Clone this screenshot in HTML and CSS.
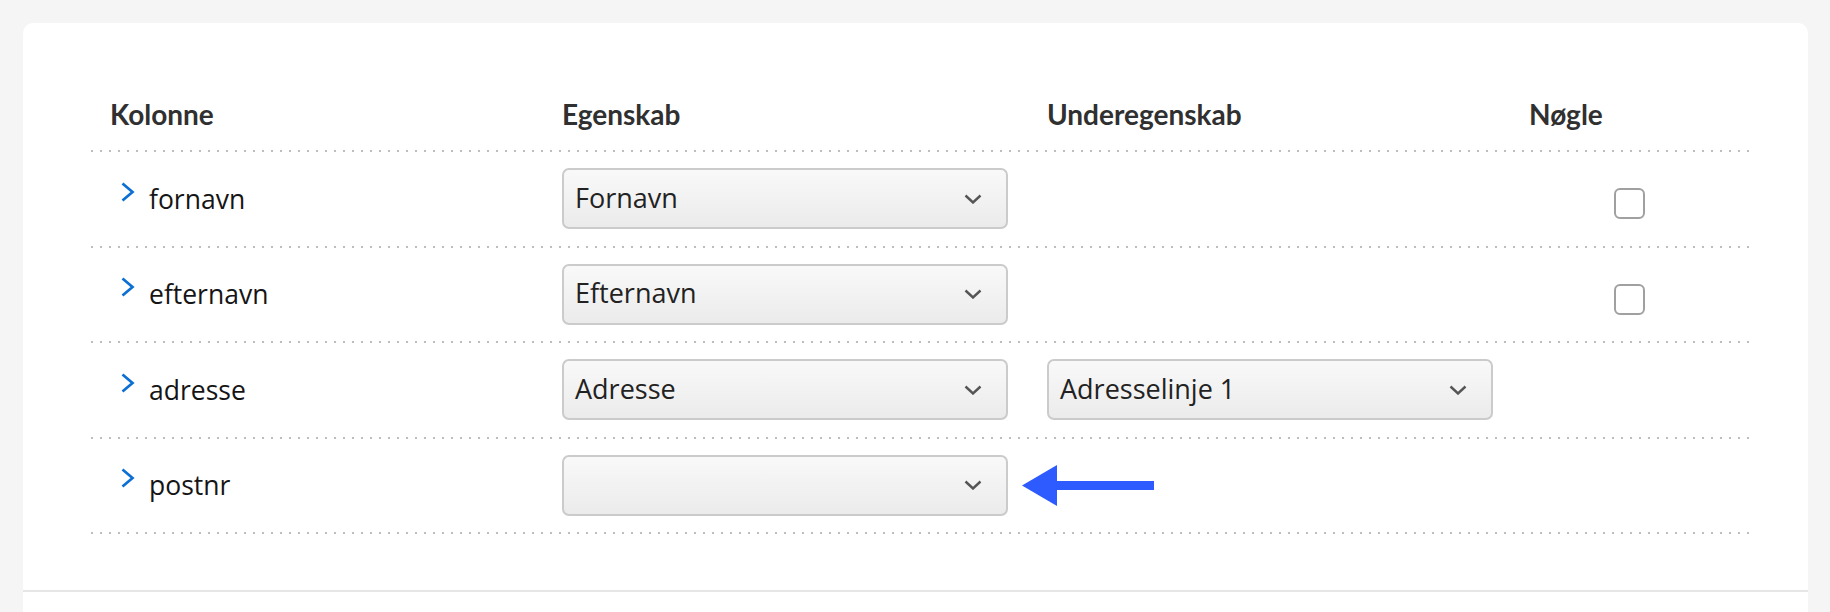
FILE: index.html
```html
<!DOCTYPE html>
<html lang="da">
<head>
<meta charset="utf-8">
<title>Kolonner</title>
<link rel="stylesheet" href="styles.css">
</head>
<body>
<div class="card">
  <div class="table">
    <div class="row head">
      <div class="cell c1">Kolonne</div>
      <div class="cell">Egenskab</div>
      <div class="cell">Underegenskab</div>
      <div class="cell">Nøgle</div>
    </div>

    <div class="row">
      <div class="cell c1"><svg class="exp" viewBox="0 0 15 20" width="15" height="20"><path d="M2.5 1.5 L12.5 10 L2.5 18.5" fill="none" stroke="#0b6fd3" stroke-width="2.7"/></svg><span class="name">fornavn</span></div>
      <div class="cell"><div class="select"><span>Fornavn</span><svg class="dd" viewBox="0 0 18 10" width="18" height="10"><path d="M1.5 1.5 L9 8.5 L16.5 1.5" fill="none" stroke="#555" stroke-width="2.4"/></svg></div></div>
      <div class="cell"></div>
      <div class="cell ck"><span class="checkbox"></span></div>
    </div>

    <div class="row">
      <div class="cell c1"><svg class="exp" viewBox="0 0 15 20" width="15" height="20"><path d="M2.5 1.5 L12.5 10 L2.5 18.5" fill="none" stroke="#0b6fd3" stroke-width="2.7"/></svg><span class="name">efternavn</span></div>
      <div class="cell"><div class="select"><span>Efternavn</span><svg class="dd" viewBox="0 0 18 10" width="18" height="10"><path d="M1.5 1.5 L9 8.5 L16.5 1.5" fill="none" stroke="#555" stroke-width="2.4"/></svg></div></div>
      <div class="cell"></div>
      <div class="cell ck"><span class="checkbox"></span></div>
    </div>

    <div class="row">
      <div class="cell c1"><svg class="exp" viewBox="0 0 15 20" width="15" height="20"><path d="M2.5 1.5 L12.5 10 L2.5 18.5" fill="none" stroke="#0b6fd3" stroke-width="2.7"/></svg><span class="name">adresse</span></div>
      <div class="cell"><div class="select"><span>Adresse</span><svg class="dd" viewBox="0 0 18 10" width="18" height="10"><path d="M1.5 1.5 L9 8.5 L16.5 1.5" fill="none" stroke="#555" stroke-width="2.4"/></svg></div></div>
      <div class="cell"><div class="select"><span>Adresselinje 1</span><svg class="dd" viewBox="0 0 18 10" width="18" height="10"><path d="M1.5 1.5 L9 8.5 L16.5 1.5" fill="none" stroke="#555" stroke-width="2.4"/></svg></div></div>
      <div class="cell"></div>
    </div>

    <div class="row">
      <div class="cell c1"><svg class="exp" viewBox="0 0 15 20" width="15" height="20"><path d="M2.5 1.5 L12.5 10 L2.5 18.5" fill="none" stroke="#0b6fd3" stroke-width="2.7"/></svg><span class="name">postnr</span></div>
      <div class="cell withArrow"><div class="select"><span></span><svg class="dd" viewBox="0 0 18 10" width="18" height="10"><path d="M1.5 1.5 L9 8.5 L16.5 1.5" fill="none" stroke="#555" stroke-width="2.4"/></svg></div><svg class="arrow" viewBox="0 0 132 41" width="132" height="41"><polygon points="0,20.5 35,0 35,41" fill="#2d5bff"/><rect x="34" y="16" width="98" height="9" fill="#2d5bff"/></svg></div>
      <div class="cell"></div>
      <div class="cell"></div>
    </div>
  </div>
  <div class="footer"></div>
</div>
</body>
</html>
```

FILE: styles.css
```css
html, body {
  margin: 0;
  padding: 0;
}
body {
  background: #f5f5f5;
  font-family: "Open Sans", "Liberation Sans", sans-serif;
  color: #151515;
  height: 612px;
  overflow: hidden;
}
.card {
  margin: 23px 22px 0 23px;
  background: #fff;
  border-radius: 10px 10px 0 0;
  padding: 0 59px 0 68px;
  min-height: 600px;
}
.table {
  display: flex;
  flex-direction: column;
}
.row {
  display: grid;
  grid-template-columns: 471px 485px 482px 1fr;
  align-items: center;
  height: 93.5px;
  padding-bottom: 2px;
  background-image: linear-gradient(to right, #bdbdbd 2px, transparent 2px);
  background-size: 9px 2px;
  background-repeat: repeat-x;
  background-position: 0 100%;
}
.row.head {
  height: auto;
  padding-top: 75px;
  padding-bottom: 22px;
  align-items: end;
  font-family: "Lato", "Open Sans", sans-serif;
  font-weight: 700;
  font-size: 28px;
  line-height: 32px;
  color: #303030;
}
.row.head .c1 {
  padding-left: 19px;
  font-size: 28px;
}
.cell {
  display: flex;
  align-items: center;
  min-width: 0;
}
.c1 {
  padding-left: 29px;
  font-size: 26.5px;
}
.exp {
  flex-shrink: 0;
  margin-bottom: 14px;
  margin-right: 14px;
}
.name {
  line-height: 32px;
}
.select {
  box-sizing: border-box;
  width: 446px;
  height: 61px;
  border: 2px solid #cbcbcb;
  border-radius: 7px;
  background: linear-gradient(to bottom, #faf9f9, #ebebeb);
  display: flex;
  align-items: center;
  justify-content: space-between;
  padding: 0 24px 0 11px;
  font-size: 27px;
  color: #222;
  flex-shrink: 0;
}
.select span {
  line-height: 32px;
  margin-top: -2px;
}
.dd {
  flex-shrink: 0;
}
.withArrow {
  gap: 14px;
}
.arrow {
  flex-shrink: 0;
}
.ck {
  padding-left: 85px;
}
.checkbox {
  display: block;
  box-sizing: border-box;
  width: 31px;
  height: 31px;
  border: 2px solid #a0a0a0;
  border-radius: 6px;
  background: #fff;
  margin-top: 10px;
}
.footer {
  margin-top: 56px;
  margin-left: -68px;
  margin-right: -59px;
  border-top: 2px solid #e6e6e6;
  height: 40px;
}
```
